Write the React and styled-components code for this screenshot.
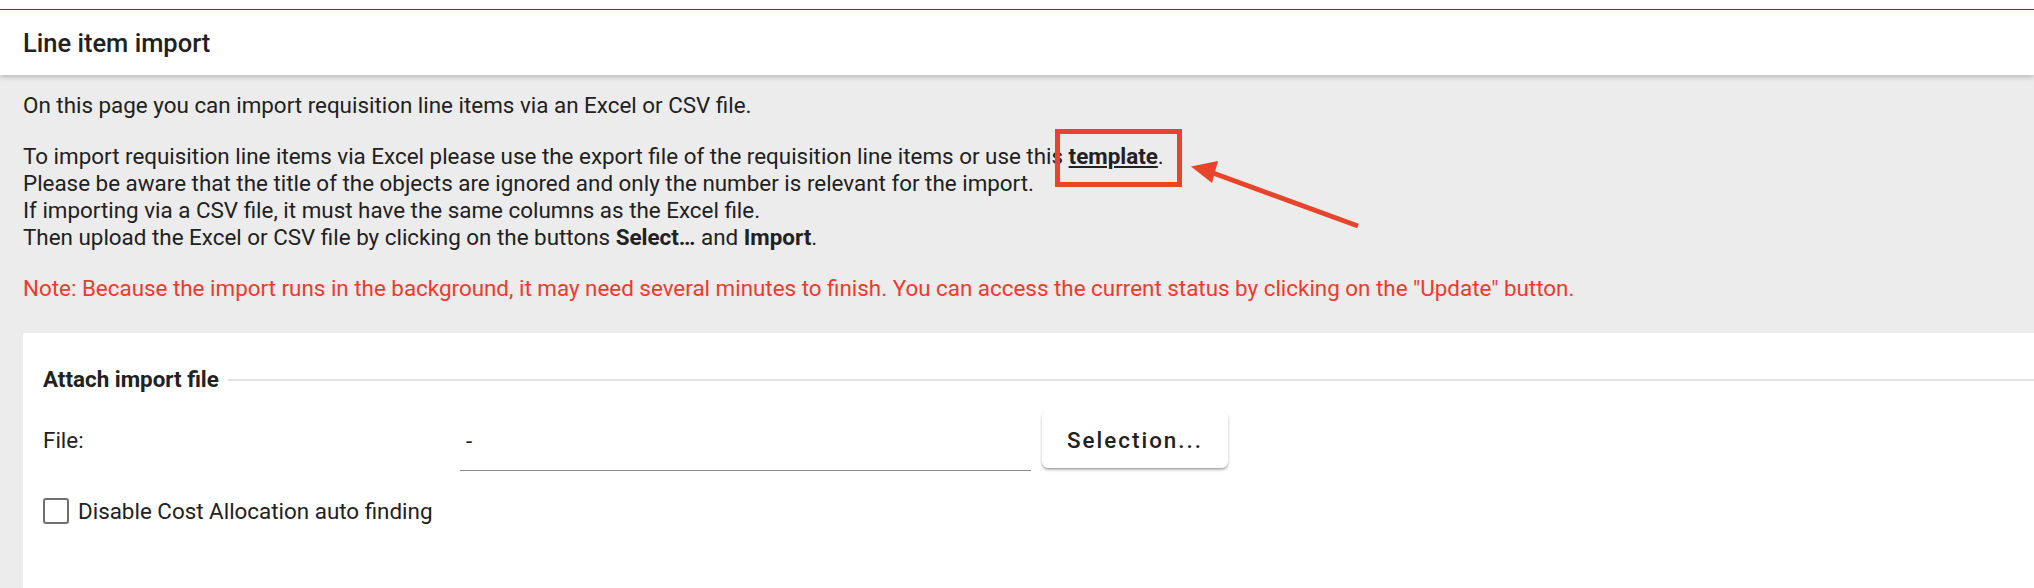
import styled, { createGlobalStyle } from "styled-components";

const GlobalStyle = createGlobalStyle`
  html, body {
    margin: 0;
    padding: 0;
    background: #fff;
  }
  body {
    font-family: Roboto, "Liberation Sans", Arial, sans-serif;
    color: #212121;
    overflow: hidden;
  }
`;

const Page = styled.div`
  position: relative;
  width: 2034px;
  height: 588px;
  overflow: hidden;
  background: #ececec;
  display: flex;
  flex-direction: column;
`;

const TopBar = styled.div`
  height: 9px;
  flex-shrink: 0;
  background: #fff;
  border-bottom: 1px solid #a8231e;
`;

const Header = styled.header`
  height: 65px;
  flex-shrink: 0;
  background: #fff;
  display: flex;
  align-items: center;
  padding-left: 23px;
  box-shadow: 0 2px 5px rgba(0, 0, 0, 0.22);
  position: relative;
  z-index: 1;
`;

const Title = styled.h1`
  margin: 0;
  font-size: 25.5px;
  font-weight: 500;
  color: #212121;
`;

const Intro = styled.section`
  padding: 17px 23px 31px;
  font-size: 22.4px;
  line-height: 27px;
`;

const Paragraph = styled.p`
  margin: 0 0 ${(p) => (p.$last ? "0" : "24px")};
  color: ${(p) => (p.$warning ? "#ee3a2c" : "#212121")};
`;

const TemplateMark = styled.span`
  position: relative;
  display: inline-block;
`;

const TemplateLink = styled.a`
  font-weight: 700;
  color: #212121;
  text-decoration: underline;
  text-decoration-thickness: 2px;
  text-underline-offset: 2px;
`;

const Highlight = styled.span`
  position: absolute;
  left: -14px;
  right: -24px;
  top: -14px;
  bottom: -17px;
  border: 5px solid #e8442c;
  pointer-events: none;
`;

const Arrow = styled.svg`
  position: absolute;
  left: 100px;
  top: 0;
  overflow: visible;
  pointer-events: none;
`;

const Card = styled.section`
  flex: 1;
  margin-left: 23px;
  background: #fff;
  padding: 33px 0 0 20px;
`;

const LegendRow = styled.div`
  display: flex;
  align-items: center;
  gap: 9px;
  line-height: 27px;
`;

const LegendText = styled.span`
  font-size: 22.4px;
  font-weight: 700;
  color: #212121;
`;

const Rule = styled.div`
  flex: 1;
  height: 2px;
  background: #e2e2e2;
`;

const FileRow = styled.div`
  display: flex;
  align-items: flex-start;
  margin-top: 18px;
`;

const FieldLabel = styled.label`
  width: 417px;
  height: 57px;
  display: flex;
  align-items: center;
  font-size: 22.4px;
`;

const FileField = styled.div`
  width: 571px;
  height: 60px;
  box-sizing: border-box;
  display: flex;
  align-items: center;
  padding-left: 6px;
  border-bottom: 1px solid #8a8a8a;
  font-size: 22.4px;
`;

const SelectButton = styled.button`
  margin-left: 11px;
  width: 186px;
  height: 57px;
  border: none;
  border-radius: 6px;
  background: #fff;
  box-shadow: 0 2px 3px rgba(0, 0, 0, 0.28), 0 1px 1px rgba(0, 0, 0, 0.12);
  font-family: inherit;
  font-size: 22.4px;
  font-weight: 500;
  letter-spacing: 2px;
  color: #212121;
`;

const CheckRow = styled.label`
  display: flex;
  align-items: center;
  gap: 9px;
  margin-top: 27px;
  font-size: 22.4px;
`;

const CheckBox = styled.span`
  width: 26px;
  height: 26px;
  box-sizing: border-box;
  border: 2px solid #707070;
  border-radius: 3px;
`;

export default function App() {
  return (
    <Page>
      <GlobalStyle />
      <TopBar />
      <Header>
        <Title>Line item import</Title>
      </Header>

      <Intro>
        <Paragraph>
          On this page you can import requisition line items via an Excel or CSV file.
        </Paragraph>
        <Paragraph>
          To import requisition line items via Excel please use the export file of the
          requisition line items or use this{" "}
          <TemplateMark>
            <TemplateLink>template</TemplateLink>
            <Highlight />
            <Arrow width="200" height="100" viewBox="0 0 200 100">
              <line x1="44" y1="30" x2="189" y2="83" stroke="#e8442c" strokeWidth="5" />
              <polygon points="22,23.5 49,18 43,40" fill="#e8442c" />
            </Arrow>
          </TemplateMark>
          .
          <br />
          Please be aware that the title of the objects are ignored and only the number is
          relevant for the import.
          <br />
          If importing via a CSV file, it must have the same columns as the Excel file.
          <br />
          Then upload the Excel or CSV file by clicking on the buttons <b>Select…</b> and{" "}
          <b>Import</b>.
        </Paragraph>
        <Paragraph $warning $last>
          Note: Because the import runs in the background, it may need several minutes to
          finish. You can access the current status by clicking on the "Update" button.
        </Paragraph>
      </Intro>

      <Card>
        <LegendRow>
          <LegendText>Attach import file</LegendText>
          <Rule />
        </LegendRow>
        <FileRow>
          <FieldLabel>File:</FieldLabel>
          <FileField>-</FileField>
          <SelectButton>Selection...</SelectButton>
        </FileRow>
        <CheckRow>
          <CheckBox />
          Disable Cost Allocation auto finding
        </CheckRow>
      </Card>
    </Page>
  );
}
